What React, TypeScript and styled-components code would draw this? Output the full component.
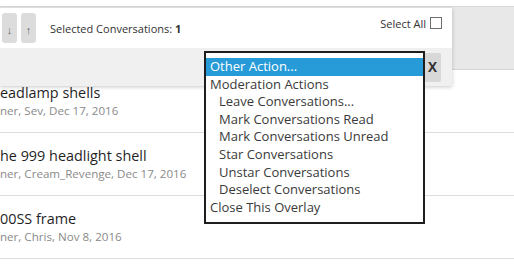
import React from "react";
import styled, { createGlobalStyle } from "styled-components";

const GlobalStyle = createGlobalStyle`
  html, body { margin: 0; padding: 0; background: #ffffff; }
  body { font-family: "Open Sans", "Noto Sans", sans-serif; overflow: hidden; }
  * { box-sizing: border-box; }
`;

const Page = styled.div`
  position: relative;
  width: 514px;
  height: 272px;
  overflow: hidden;
  background: #ffffff;
`;

const HeaderBar = styled.div`
  margin-top: 6px;
  height: 64px;
  background: #e8e8e8;
  border-top: 1px solid #dadada;
  border-bottom: 1px solid #d6d6d6;
`;

const List = styled.ul`
  list-style: none;
  margin: 0;
  padding: 0;
`;

const Item = styled.li`
  height: 63px;
  padding-top: 13px;
  border-bottom: 1px solid #dddddd;
  white-space: nowrap;
`;

const Title = styled.div`
  font-size: 14.4px;
  line-height: 20px;
  color: #1f1f1f;
`;

const Meta = styled.div`
  font-size: 11.6px;
  line-height: 16px;
  color: #8a8a8a;
`;

const Panel = styled.div`
  position: absolute;
  left: 0;
  top: 8px;
  width: 452px;
  background: #ffffff;
  box-shadow: 0 1px 4px rgba(0, 0, 0, 0.22);
`;

const TopRow = styled.div`
  height: 40px;
  display: flex;
  align-items: center;
  padding: 0 10px 0 2px;
`;

const ArrowGroup = styled.div`
  display: flex;
  gap: 4px;
`;

const ArrowButton = styled.div`
  width: 15px;
  height: 30px;
  border-radius: 3px;
  background: #dcdcdc;
  color: #666666;
  font-size: 11px;
  display: flex;
  align-items: center;
  justify-content: center;
  padding-top: 2px;
`;

const SelectedText = styled.div`
  margin-left: 14px;
  font-size: 11px;
  color: #333333;
  flex: 1;
  b { font-weight: 700; }
`;

const SelectAll = styled.label`
  align-self: flex-start;
  margin-top: 9px;
  display: flex;
  align-items: flex-start;
  gap: 4px;
  font-size: 11px;
  line-height: 13px;
  color: #333333;
`;

const CheckBox = styled.span`
  display: block;
  width: 12px;
  height: 12px;
  border: 1px solid #6e6e6e;
  background: #ffffff;
`;

const ActionStrip = styled.div`
  height: 38px;
  background: #f0f0f0;
  display: flex;
  align-items: center;
  justify-content: flex-end;
  padding-right: 11px;
`;

const CloseButton = styled.div`
  width: 22px;
  height: 29px;
  background: #d8d8d8;
  border-radius: 2px;
  display: flex;
  align-items: center;
  justify-content: flex-end;
  padding-right: 4px;
  font-size: 13.5px;
  font-weight: 700;
  color: #333333;
`;

const Dropdown = styled.ul`
  position: absolute;
  left: 204px;
  top: 51px;
  width: 221px;
  margin: 0;
  padding: 5px 0 6px;
  list-style: none;
  background: #ffffff;
  border: 2px solid #1e1e1e;
`;

const Option = styled.li<{ $selected?: boolean; $indent?: boolean }>`
  height: 17.6px;
  line-height: 17.6px;
  font-size: 13px;
  white-space: nowrap;
  padding-left: ${(p) => (p.$indent ? "13px" : "4px")};
  background: ${(p) => (p.$selected ? "#279bd8" : "transparent")};
  color: ${(p) => (p.$selected ? "#ffffff" : "#3a3a3a")};
`;

const conversations = [
  { title: "eadlamp shells", meta: "ner, Sev, Dec 17, 2016" },
  { title: "he 999 headlight shell", meta: "ner, Cream_Revenge, Dec 17, 2016" },
  { title: "00SS frame", meta: "ner, Chris, Nov 8, 2016" },
];

const options: { label: string; indent?: boolean; selected?: boolean }[] = [
  { label: "Other Action...", selected: true },
  { label: "Moderation Actions" },
  { label: "Leave Conversations...", indent: true },
  { label: "Mark Conversations Read", indent: true },
  { label: "Mark Conversations Unread", indent: true },
  { label: "Star Conversations", indent: true },
  { label: "Unstar Conversations", indent: true },
  { label: "Deselect Conversations", indent: true },
  { label: "Close This Overlay" },
];

export default function App() {
  return (
    <>
      <GlobalStyle />
      <Page>
        <HeaderBar />
        <List>
          {conversations.map((c) => (
            <Item key={c.title}>
              <Title>{c.title}</Title>
              <Meta>{c.meta}</Meta>
            </Item>
          ))}
        </List>
        <Panel>
          <TopRow>
            <ArrowGroup>
              <ArrowButton>↓</ArrowButton>
              <ArrowButton>↑</ArrowButton>
            </ArrowGroup>
            <SelectedText>
              Selected Conversations: <b>1</b>
            </SelectedText>
            <SelectAll>
              Select All
              <CheckBox />
            </SelectAll>
          </TopRow>
          <ActionStrip>
            <CloseButton>X</CloseButton>
          </ActionStrip>
        </Panel>
        <Dropdown>
          {options.map((o) => (
            <Option key={o.label} $indent={o.indent} $selected={o.selected}>
              {o.label}
            </Option>
          ))}
        </Dropdown>
      </Page>
    </>
  );
}
